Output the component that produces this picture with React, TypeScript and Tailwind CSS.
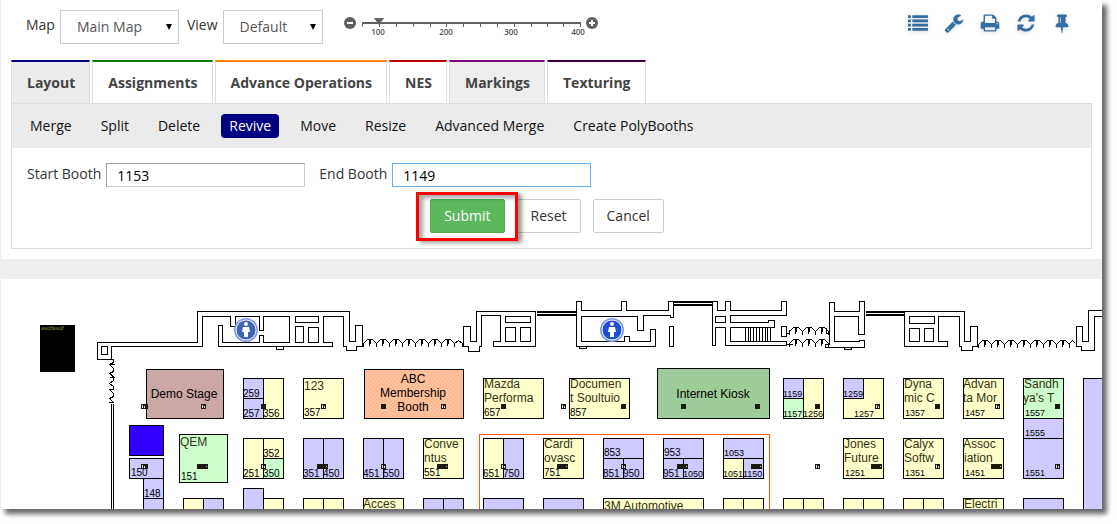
import { useState, type ReactNode } from "react";

type Booth = [x: number, y: number, w: number, h: number, fill: string];
type Label = [x: number, y: number, text: string];

const Y = "#ffffcc";
const B = "url(#lavender)";
const G = "#ccffcc";

const tabs = [
  { name: "Layout", style: "border-t-[#000080] bg-[#ebebeb]" },
  { name: "Assignments", style: "border-t-[#008000] bg-white" },
  { name: "Advance Operations", style: "border-t-[#ff8000] bg-white" },
  { name: "NES", style: "border-t-[#c00000] bg-white" },
  { name: "Markings", style: "border-t-[#800080] bg-[#eeeeee]" },
  { name: "Texturing", style: "border-t-[#400040] bg-white" },
];

const actions = [
  "Merge",
  "Split",
  "Delete",
  "Revive",
  "Move",
  "Resize",
  "Advanced Merge",
  "Create PolyBooths",
];

const tools = [
  {
    name: "List",
    path: "M0 192h256v256h-256zM384 192h1408v256h-1408zM0 576h256v256h-256zM384 576h1408v256h-1408zM0 960h256v256h-256zM384 960h1408v256h-1408zM0 1344h256v256h-256zM384 1344h1408v256h-1408z",
  },
  {
    name: "Settings",
    path: "M448 1472q0-26-19-45t-45-19-45 19-19 45 19 45 45 19 45-19 19-45zm644-420l-682 682q-37 37-90 37-52 0-91-37l-106-108q-38-36-38-90 0-53 38-91l681-681q39 98 114.5 173.5t173.5 114.5zm634-435q0 39-23 106-47 134-164.5 217.5t-258.5 83.5q-185 0-316.5-131.5t-131.5-316.5 131.5-316.5 316.5-131.5q58 0 121.5 16.5t107.5 46.5q16 11 16 28t-16 28l-293 169v224l193 107q5-3 79-48.5t135.5-81 70.5-35.5q15 0 23.5 10t8.5 25z",
  },
  {
    name: "Print",
    path: "M448 1536h896v-256h-896v256zm0-640h896v-384h-160q-40 0-68-28t-28-68v-160h-640v640zm1152 64q0-26-19-45t-45-19-45 19-19 45 19 45 45 19 45-19 19-45zm128 0v416q0 13-9.5 22.5t-22.5 9.5h-224v160q0 40-28 68t-68 28h-960q-40 0-68-28t-28-68v-160h-224q-13 0-22.5-9.5t-9.5-22.5v-416q0-79 56.5-135.5t135.5-56.5h64v-544q0-40 28-68t68-28h672q40 0 88 20t76 48l152 152q28 28 48 76t20 88v256h64q79 0 135.5 56.5t56.5 135.5z",
  },
  {
    name: "Refresh",
    path: "M1639 1056q0 5-1 7-64 268-268 434.5t-478 166.5q-146 0-282.5-55t-243.5-157l-129 129q-19 19-45 19t-45-19-19-45v-448q0-26 19-45t45-19h448q26 0 45 19t19 45-19 45l-137 137q71 66 161 102t187 36q134 0 250-65t186-179q11-17 53-117 8-23 30-23h192q13 0 22.5 9.5t9.5 22.5zm25-800v448q0 26-19 45t-45 19h-448q-26 0-45-19t-19-45 19-45l138-138q-148-137-349-137-134 0-250 65t-186 179q-11 17-53 117-8 23-30 23h-199q-13 0-22.5-9.5t-9.5-22.5v-7q65-268 270-434.5t480-166.5q146 0 284 55.5t245 156.5l130-129q19-19 45-19t45 19 19 45z",
  },
  {
    name: "Pin",
    path: "M800 864v-448q0-14-9-23t-23-9-23 9-9 23v448q0 14 9 23t23 9 23-9 9-23zm672 352q0 26-19 45t-45 19h-429l-51 483q-2 12-10.5 20.5t-20.5 8.5h-1q-27 0-32-27l-76-485h-404q-26 0-45-19t-19-45q0-123 78.5-221.5t177.5-98.5v-512q-52 0-90-38t-38-90 38-90 90-38h640q52 0 90 38t38 90-38 90-90 38v512q99 0 177.5 98.5t78.5 221.5z",
  },
];

const booths: Booth[] = [
  [146, 369, 77, 49, "url(#stage)"],
  [129, 425, 34, 30, "#3300ff"],
  [129, 458, 34, 20, B],
  [143, 478, 20, 20, B],
  [143, 498, 20, 20, B],
  [179, 434, 48, 48, G],
  [183, 498, 20, 20, Y],
  [203, 498, 20, 20, B],
  [243, 378, 20, 20, B],
  [243, 398, 20, 20, B],
  [263, 378, 20, 40, Y],
  [243, 438, 20, 40, Y],
  [263, 438, 20, 20, Y],
  [263, 458, 20, 20, G],
  [243, 488, 20, 30, B],
  [263, 498, 20, 20, Y],
  [303, 378, 40, 40, Y],
  [303, 438, 20, 40, B],
  [323, 438, 20, 40, B],
  [303, 498, 20, 20, Y],
  [323, 498, 20, 20, Y],
  [364, 369, 99, 49, "url(#membership)"],
  [363, 438, 20, 40, B],
  [383, 438, 20, 40, B],
  [363, 498, 40, 20, Y],
  [423, 438, 40, 40, Y],
  [423, 498, 20, 20, B],
  [443, 498, 20, 20, B],
  [483, 378, 60, 40, Y],
  [483, 438, 20, 40, Y],
  [503, 438, 20, 40, B],
  [483, 498, 40, 20, B],
  [569, 378, 60, 40, Y],
  [543, 438, 40, 40, Y],
  [543, 498, 40, 20, B],
  [603, 438, 40, 20, B],
  [603, 458, 20, 20, B],
  [623, 458, 20, 20, B],
  [603, 498, 100, 20, Y],
  [657, 368, 112, 50, "url(#kiosk)"],
  [663, 438, 40, 20, B],
  [663, 458, 20, 20, B],
  [683, 458, 20, 20, B],
  [723, 438, 40, 20, B],
  [723, 458, 20, 20, Y],
  [743, 458, 20, 20, B],
  [723, 498, 20, 20, Y],
  [743, 498, 20, 20, Y],
  [783, 378, 20, 20, B],
  [783, 398, 20, 20, G],
  [803, 378, 20, 40, Y],
  [783, 498, 20, 20, Y],
  [803, 498, 20, 20, Y],
  [843, 378, 40, 40, Y],
  [843, 378, 20, 20, B],
  [843, 438, 40, 40, Y],
  [843, 498, 20, 20, Y],
  [863, 498, 20, 20, Y],
  [903, 378, 40, 40, Y],
  [903, 438, 40, 40, Y],
  [903, 498, 20, 20, Y],
  [923, 498, 20, 20, Y],
  [963, 378, 40, 40, Y],
  [963, 438, 40, 40, Y],
  [963, 498, 40, 20, Y],
  [1023, 378, 40, 40, G],
  [1023, 418, 40, 20, B],
  [1023, 438, 40, 40, B],
  [1023, 498, 40, 20, B],
  [1083, 378, 40, 140, B],
];

const numbers: Label[] = [
  [131, 476, "150"],
  [144, 497, "148"],
  [181, 480, "151"],
  [243, 397, "259"],
  [243, 417, "257"],
  [263, 417, "356"],
  [243, 477, "251"],
  [263, 457, "352"],
  [263, 477, "350"],
  [304, 416, "357"],
  [303, 477, "351"],
  [323, 477, "450"],
  [363, 477, "451"],
  [383, 477, "550"],
  [424, 476, "551"],
  [484, 416, "657"],
  [483, 477, "651"],
  [503, 477, "750"],
  [570, 416, "857"],
  [544, 476, "751"],
  [604, 456, "853"],
  [603, 477, "851"],
  [623, 477, "950"],
  [664, 456, "953"],
  [663, 477, "951"],
  [683, 477, "1050"],
  [724, 456, "1053"],
  [723, 477, "1051"],
  [743, 477, "1150"],
  [783, 397, "1159"],
  [783, 417, "1157"],
  [803, 417, "1256"],
  [843, 397, "1259"],
  [854, 417, "1257"],
  [845, 476, "1251"],
  [905, 416, "1357"],
  [905, 476, "1351"],
  [965, 416, "1457"],
  [965, 476, "1451"],
  [1025, 416, "1557"],
  [1025, 436, "1555"],
  [1025, 476, "1551"],
];

const names: Label[] = [
  [180, 446, "QEM"],
  [304, 390, "123"],
  [424, 448, "Conve"],
  [424, 462, "ntus"],
  [363, 508, "Acces"],
  [484, 388, "Mazda"],
  [484, 402, "Performa"],
  [570, 388, "Documen"],
  [570, 402, "t Soultuio"],
  [544, 448, "Cardi"],
  [544, 462, "ovasc"],
  [604, 510, "3M Automotive"],
  [844, 448, "Jones"],
  [844, 462, "Future"],
  [904, 388, "Dyna"],
  [904, 402, "mic C"],
  [904, 448, "Calyx"],
  [904, 462, "Softw"],
  [963, 388, "Advan"],
  [963, 402, "ta Mor"],
  [963, 448, "Assoc"],
  [964, 462, "iation"],
  [964, 508, "Electri"],
  [1024, 388, "Sandh"],
  [1023, 402, "ya's T"],
];

const captions: Label[] = [
  [184, 398, "Demo Stage"],
  [413, 383, "ABC"],
  [413, 397, "Membership"],
  [413, 411, "Booth"],
  [713, 398, "Internet Kiosk"],
];

// power drops: x, y, width, hollow
const drops: [number, number, number, boolean][] = [
  [141, 404, 7, true],
  [201, 404, 5, true],
  [261, 404, 5, false],
  [321, 404, 5, true],
  [381, 404, 5, false],
  [441, 404, 5, true],
  [501, 404, 5, false],
  [561, 404, 5, true],
  [621, 404, 5, false],
  [681, 404, 5, false],
  [755, 404, 5, false],
  [815, 404, 5, false],
  [875, 404, 5, true],
  [935, 404, 5, false],
  [995, 404, 5, true],
  [1055, 404, 5, false],
  [141, 464, 7, true],
  [197, 464, 11, false],
  [261, 464, 5, true],
  [317, 464, 11, false],
  [381, 464, 5, true],
  [437, 464, 11, false],
  [501, 464, 5, true],
  [557, 464, 11, false],
  [621, 464, 5, true],
  [677, 464, 11, false],
  [751, 464, 11, false],
  [815, 464, 5, true],
  [871, 464, 11, false],
  [935, 464, 5, true],
  [991, 464, 11, false],
  [1055, 464, 5, true],
];

const walls = [
  "M111 359H97V342H197V311H349V341H355V325H362V346H356V350H346V346H343V316H323V342H332V346H218V325H222V342H259V335H263V342H289V316H263V330H259V316H235V326H230V316H202V346H111Z",
  "M101 346H107V354H101ZM295 316H318V322H295ZM295 326H303V342H295ZM308 327H318V342H308ZM276 346V349H283V346",
  "M463 326H470V341H476V311H535V346H493V341H500V315H481V346H479V351H468V346H463Z",
  "M505 316H530V322H505ZM505 327H515V341H505ZM520 327H530V341H520Z",
  "M576 301H581V310H621V301H626V310H668V301H673V317H670V315H643V330H637V316H581V341H624V336H629V341H650V329H655V346H576Z",
  "M579 346V348H586V346M669 326H673V346H669Z",
  "M712 301H717V310H725V301H730V310H781V301H786V315H730V322H768V320H774V327H730V341H786V345H725V327H715V345H712Z",
  "M715 316H725V322H715ZM781 326H786V336H781ZM786 333H789V329M786 344H792",
  "M745 327V341M748 327V341M750 327V341M753 327V341M756 327V341M759 327V341M762 327V341M765 327V341M767 327V341M770 327V341",
  "M829 302H834V311H859V301H864V334H858V316H834V341H859V340H864V347H825V344H829Z",
  "M844 347V349H851V347M826 327V333H829",
  "M904 311H964V341H970V326H977V346H972V350H961V346H959V316H938V341H947V346H904Z",
  "M909 316H934V323H909ZM909 328H919V341H909ZM924 328H933V341H924Z",
  "M1120 310H1088V341H1082V326H1076V346H1081V350H1094V316H1120",
  "M111 403V520M113 403V520",
];

// leaf pairs of the folding doors, 13 units apart
function Doors({ x, y, count }: { x: number; y: number; count: number }) {
  return (
    <>
      {Array.from({ length: count }, (_, i) => (
        <path
          key={i}
          d={`M${x + i * 13} ${y + 7}v-3l2-2l2-2h5l2 2l2 2v3M${x + i * 13 + 6} ${y}v6M${x + i * 13 + 7} ${y}v4`}
        />
      ))}
    </>
  );
}

function Restroom({ x, color }: { x: number; color: string }) {
  return (
    <g>
      <circle cx={x} cy={330} r={11} fill={color} stroke="#7f9be0" strokeWidth={2} />
      <circle cx={x} cy={330} r={10} fill="none" stroke="#eef2fc" />
      <circle cx={x} cy={324} r={2} fill="#fff" />
      <path d={`M${x - 3} 327h6l1 5h-2v5h-4v-5h-2z`} fill="#fff" />
    </g>
  );
}

function FloorPlan() {
  return (
    <svg
      viewBox="1 279 1101 230"
      preserveAspectRatio="xMinYMin slice"
      className="block w-full font-['Liberation_Sans',Arial,sans-serif]"
      role="img"
      aria-label="Floor plan"
    >
      <defs>
        <pattern id="lavender" width="4" height="4" patternUnits="userSpaceOnUse">
          <rect width="4" height="4" fill="#ccccff" />
          <path d="M0 0h1v1h-1zM2 2h1v1h-1z" fill="#d8bfff" />
        </pattern>
        <pattern id="stage" width="4" height="4" patternUnits="userSpaceOnUse">
          <rect width="4" height="4" fill="#cca4a4" />
          <path d="M0 0h1v1h-1zM2 2h1v1h-1z" fill="#cccc99" />
          <path d="M2 0h1v1h-1zM0 2h1v1h-1z" fill="#cc99cc" />
        </pattern>
        <pattern id="membership" width="4" height="4" patternUnits="userSpaceOnUse">
          <rect width="4" height="4" fill="#ffbf99" />
          <path d="M0 0h1v1h-1zM2 2h1v1h-1z" fill="#ffcc99" />
          <path d="M2 0h1v1h-1zM0 2h1v1h-1z" fill="#f0a890" />
        </pattern>
        <pattern id="kiosk" width="4" height="4" patternUnits="userSpaceOnUse">
          <rect width="4" height="4" fill="#99cc99" />
          <path d="M0 0h1v1h-1zM2 2h1v1h-1z" fill="#bbcc88" />
          <path d="M2 0h1v1h-1zM0 2h1v1h-1z" fill="#99d0a8" />
        </pattern>
      </defs>

      <rect x="40" y="325" width="35" height="47" />
      <text x="41" y="330" fontSize="6" fontStyle="italic" fill="#8a8a3c">
        asdfasdf
      </text>

      <g transform="translate(0.5 0.5)" fill="none" stroke="#000" shapeRendering="crispEdges">
        {walls.map((d) => (
          <path key={d} d={d} />
        ))}
        <path d="M108 359h5v3l-4 2h5M109 364l4 4v3l-4 2l5 4h-5M113 377v3l-4 3l4 3v3h-5M109 389l4 4v3l-4 2l4 4h-5" />
        <path
          d="M536 311.5H576M536 314.5H576M673 301.5H712M673 304.5H712M865 311.5H904M865 314.5H904"
          strokeWidth={2}
        />
        <Doors x={363} y={339} count={7} />
        <path d="M454 346v-3l4-3l4 3v3" />
        <Doors x={978} y={340} count={7} />
        <path d="M1069 346v-3l3-3l3 3" />
        <Doors x={789} y={327} count={3} />
        <Doors x={789} y={339} count={3} />
        <path d="M479 520V434H769V520" stroke="#ff5500" />
        {booths.map(([x, y, w, h, fill]) => (
          <rect key={`${x}-${y}-${w}`} x={x} y={y} width={w} height={h} fill={fill} />
        ))}
      </g>

      <Restroom x={246} color="#3f64b4" />
      <Restroom x={612} color="#1f4fd8" />

      <g shapeRendering="crispEdges">
        {drops.map(([x, y, w, hollow]) => (
          <g key={`${x}-${y}`}>
            <rect x={x} y={y} width={w} height={5} fill="#1a1a10" />
            {hollow && <path d={`M${x + 1} ${y + 1}h1v3h-1zM${x + 3} ${y + 2}h1v2h-1z`} fill="#ddd" />}
            {w === 11 && <rect x={x + 9} y={y + 2} width={1} height={1} fill="#ccc" />}
          </g>
        ))}
      </g>

      <g fontSize="12" fill="#333311">
        {names.map(([x, y, text]) => (
          <text key={`${x}-${y}`} x={x} y={y}>
            {text}
          </text>
        ))}
      </g>
      <g fontSize="12" textAnchor="middle">
        {captions.map(([x, y, text]) => (
          <text key={text} x={x} y={y}>
            {text}
          </text>
        ))}
      </g>
      {/* four digits have to fit a 20 unit booth */}
      {numbers.map(([x, y, text]) => (
        <text key={text} x={x} y={y} fontSize={text.length > 3 ? 9 : 10}>
          {text}
        </text>
      ))}
    </svg>
  );
}

function Picker({ id, label, width, options }: { id: string; label: string; width: string; options: string[] }) {
  return (
    <div className="flex items-center gap-[5px]">
      <label htmlFor={id} className="pb-1">
        {label}
      </label>
      <div className={`relative ${width}`}>
        <select
          id={id}
          className="block h-[34px] w-full appearance-none border border-[#cccccc] bg-white pl-4 text-[#555555] outline-none"
        >
          {options.map((option) => (
            <option key={option}>{option}</option>
          ))}
        </select>
        <svg viewBox="0 0 6 6" className="pointer-events-none absolute right-[7px] top-[14px] size-[6px]">
          <path d="M0 0h6l-3 6z" />
        </svg>
      </div>
    </div>
  );
}

function ZoomButton({ label, children }: { label: string; children: ReactNode }) {
  return (
    <button type="button" aria-label={label} className="mt-[17px] size-3">
      <svg viewBox="0 0 12 12" className="block size-3">
        <circle cx="6" cy="6" r="6" fill="#606060" />
        {children}
      </svg>
    </button>
  );
}

function ZoomScale() {
  const [zoom, setZoom] = useState(100);
  const thumb = 17 + ((zoom - 100) * 200) / 300;

  return (
    <div className="flex items-start">
      <ZoomButton label="Zoom out">
        <path d="M3 5h6v2h-6z" fill="#fff" />
      </ZoomButton>
      <div className="relative ml-[6px] mt-[15px] h-[22px] w-[224px]">
        <svg viewBox="0 0 224 22" className="block h-full w-full">
          <g fill="#606060" shapeRendering="crispEdges">
            <path d="M0 7h219v2H0z" />
            {[0, 17, 34, 51, 68, 84, 101, 118, 135, 152, 169, 185, 201, 218].map((x) => (
              <rect key={x} x={x} y={8} width={1} height={4} />
            ))}
          </g>
          <path d={`M${thumb - 5} 3h10l-5 7z`} fill="#606060" />
          <g
            fontSize="8"
            fontWeight="600"
            textAnchor="middle"
            fill="#505050"
            className="font-['Open_Sans',sans-serif]"
          >
            <text x="16" y="20">100</text>
            <text x="84" y="20">200</text>
            <text x="149" y="20">300</text>
            <text x="216" y="20">400</text>
          </g>
        </svg>
        <input
          type="range"
          aria-label="Zoom"
          min={100}
          max={400}
          value={zoom}
          onChange={(e) => setZoom(Number(e.target.value))}
          className="absolute inset-0 h-full w-full opacity-0"
        />
      </div>
      <ZoomButton label="Zoom in">
        <path d="M3 5h2v-2h2v2h2v2h-2v2h-2v-2h-2z" fill="#fff" />
      </ZoomButton>
    </div>
  );
}

export default function App() {
  const [startBooth, setStartBooth] = useState("1153");
  const [endBooth, setEndBooth] = useState("1149");

  return (
    <div className="bg-white pb-[15px] pr-[15px] font-['Open_Sans',sans-serif] text-sm text-[#333333]">
      <main className="bg-[#eeeeee] pl-px shadow-[5px_5px_5px_rgba(0,0,0,0.6)]">
        <section className="bg-white pb-[10px]">
          <header className="flex h-[60px] items-start justify-between pl-[25px] pr-[30px]">
            <div className="flex items-start">
              <div className="flex gap-2 pt-[10px]">
                <Picker id="map" label="Map" width="w-[119px]" options={["Main Map"]} />
                <Picker id="view" label="View" width="w-[100px]" options={["Default"]} />
              </div>
              <div className="pl-[21px]">
                <ZoomScale />
              </div>
            </div>
            <div className="flex gap-4 pt-[13px]">
              {tools.map((tool) => (
                <button key={tool.name} type="button" aria-label={tool.name} className="size-5">
                  <svg viewBox="0 0 1792 1792" className="size-5 fill-[#336fa5] drop-shadow-sm">
                    <path d={tool.path} />
                  </svg>
                </button>
              ))}
            </div>
          </header>

          <nav className="flex gap-[2px] px-[10px]">
            {tabs.map((tab) => (
              <button
                key={tab.name}
                type="button"
                className={`h-[43px] border-x border-t-2 border-x-[#dddddd] pl-[15px] pr-[14px] font-bold text-[#444444] ${tab.style}`}
              >
                {tab.name}
              </button>
            ))}
          </nav>

          <div className="mx-[10px] border border-[#dddddd]">
            <nav className="flex h-11 items-center gap-[13px] bg-[#ebebeb] pl-[10px]">
              {actions.map((action) => (
                <button
                  key={action}
                  type="button"
                  className={`h-6 rounded px-2 ${action === "Revive" ? "bg-[#000080] text-white" : "text-[#111111]"}`}
                >
                  {action}
                </button>
              ))}
            </nav>
            <form onSubmit={(e) => e.preventDefault()} className="pb-[15px] pt-[15px]">
              <div className="flex items-center gap-[14px] pl-[15px]">
                <div className="flex items-center gap-[5px]">
                  <label htmlFor="startBooth" className="pb-[2px]">
                    Start Booth
                  </label>
                  <input
                    id="startBooth"
                    value={startBooth}
                    onChange={(e) => setStartBooth(e.target.value)}
                    className="h-6 w-[199px] border border-[#cccccc] border-l-[#a0a0a0] border-t-[#a0a0a0] px-[10px] text-black outline-none"
                  />
                </div>
                <div className="flex items-center gap-[5px]">
                  <label htmlFor="endBooth" className="pb-[2px]">
                    End Booth
                  </label>
                  <input
                    id="endBooth"
                    value={endBooth}
                    onChange={(e) => setEndBooth(e.target.value)}
                    className="h-6 w-[199px] border border-[#66afe9] px-[10px] text-black outline-none"
                  />
                </div>
              </div>
              <div className="mt-3 flex justify-center gap-3 pr-[9px]">
                <div className="relative">
                  <button
                    type="submit"
                    className="h-[34px] rounded-xs border border-[#4cae4c] bg-[#5cb85c] px-[13px] text-white"
                  >
                    Submit
                  </button>
                  <div className="pointer-events-none absolute -bottom-2 -left-[14px] -right-[13px] -top-[7px] z-10 border-3 border-[#ff0000] shadow-[4px_2px_4px_rgba(0,0,0,0.4),inset_4px_3px_4px_rgba(0,0,0,0.35)]" />
                </div>
                <button type="reset" className="h-[34px] rounded-xs border border-[#cccccc] bg-white px-[13px]">
                  Reset
                </button>
                <button type="button" className="h-[34px] rounded-xs border border-[#cccccc] bg-white px-[13px]">
                  Cancel
                </button>
              </div>
            </form>
          </div>
        </section>

        <section className="mt-5 bg-white">
          <FloorPlan />
        </section>
      </main>
    </div>
  );
}
